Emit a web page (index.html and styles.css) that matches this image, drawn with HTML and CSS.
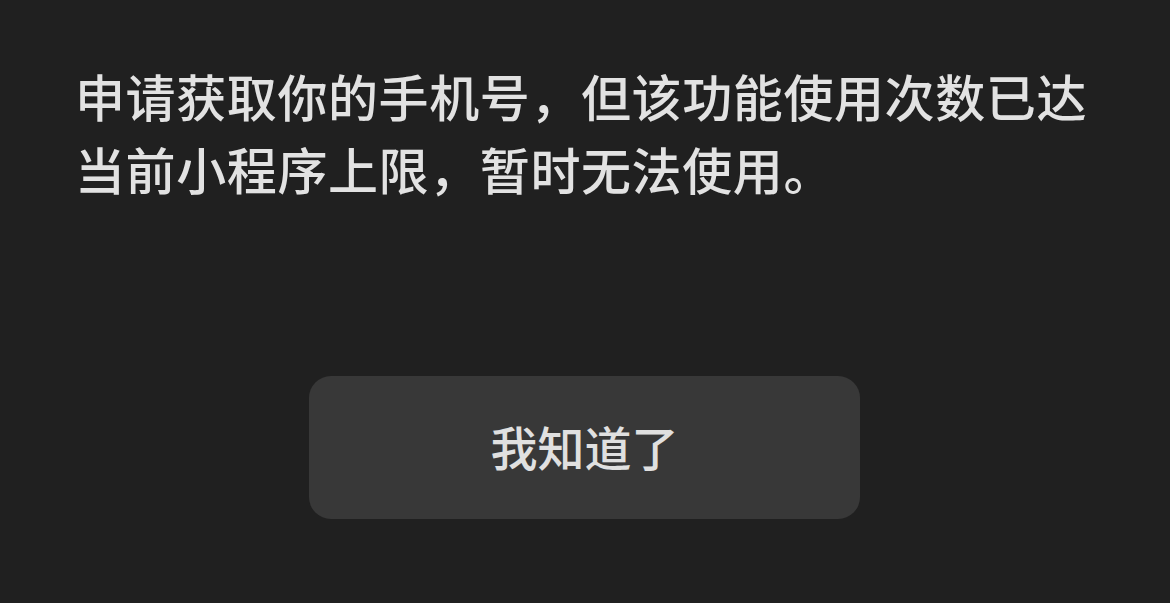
FILE: index.html
```html
<!DOCTYPE html>
<html lang="zh-CN">
<head>
<meta charset="utf-8">
<link rel="stylesheet" href="styles.css">
</head>
<body>
<main class="dialog">
  <p class="message">申请获取你的手机号，但该功能使用次数已达当前小程序上限，暂时无法使用。</p>
  <div class="actions">
    <button class="ok">我知道了</button>
  </div>
</main>
</body>
</html>
```
FILE: styles.css
```css
html, body {
  margin: 0;
  padding: 0;
  background: #202020;
  width: 1170px;
  height: 603px;
  overflow: hidden;
}
.dialog {
  font-family: "Noto Sans CJK SC", "Noto Sans", sans-serif;
  padding: 59px 0 0 75px;
  display: flex;
  flex-direction: column;
}
.message {
  margin: 0;
  width: 1030px;
  font-size: 50px;
  font-weight: 500;
  letter-spacing: 0.6px;
  line-height: 73px;
  color: #e2e2e2;
}
.actions {
  margin-top: 171px;
  margin-left: 234px;
  display: flex;
}
.ok {
  width: 551px;
  height: 143px;
  border: none;
  border-radius: 22px;
  background: #383838;
  color: #e0e0e0;
  font-family: "Noto Sans CJK SC", "Noto Sans", sans-serif;
  font-size: 47px;
  font-weight: 500;
  padding: 0 0 4px 0;
}
```
